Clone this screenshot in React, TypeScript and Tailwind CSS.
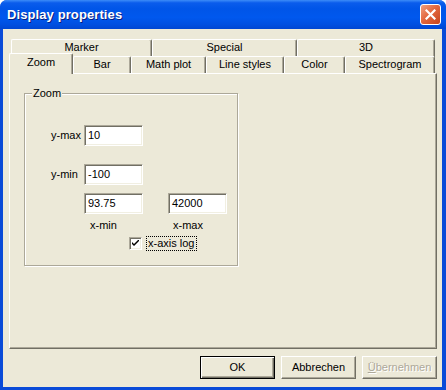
import * as React from 'react';

const font = { fontFamily: '"Liberation Sans", Arial, sans-serif' };

function Tab({ label, w, front }: { label: string; w: string; front?: boolean }) {
  return (
    <div
      className={`${w} ${front ? 'h-[17px]' : 'h-[18px]'} flex shrink-0 items-start justify-center rounded-t-[2px] border-t border-l border-r border-t-white border-l-white border-r-[#716F64] bg-[#ECE9D8] pt-[1px] text-[11px] leading-[13px] text-black shadow-[inset_-1px_0_0_#ACA899]`}
    >
      {label}
    </div>
  );
}

function Field({ value, w = 'w-[59px]' }: { value: string; w?: string }) {
  return (
    <div
      className={`${w} flex h-[21px] shrink-0 items-center border border-t-[#ACA899] border-l-[#ACA899] border-r-white border-b-white bg-white pl-[3px] text-[11px] text-black shadow-[inset_1px_1px_0_#716F64,inset_-1px_-1px_0_#F1EFE2]`}
    >
      {value}
    </div>
  );
}

function Button({
  label,
  isDefault,
  disabled,
}: {
  label: React.ReactNode;
  isDefault?: boolean;
  disabled?: boolean;
}) {
  return (
    <div
      className={`flex h-[23px] w-[75px] items-center justify-center bg-[#ECE9D8] text-[11px] ${
        isDefault
          ? 'border border-black shadow-[inset_1px_1px_0_#fff,inset_-1px_-1px_0_#716F64,inset_-2px_-2px_0_#ACA899]'
          : 'border border-t-white border-l-white border-r-[#716F64] border-b-[#716F64] shadow-[inset_-1px_-1px_0_#ACA899]'
      } ${disabled ? 'text-[#ACA899] [text-shadow:1px_1px_0_#fff]' : 'text-black'}`}
    >
      {label}
    </div>
  );
}

export default function App() {
  return (
    <div
      className="flex h-[390px] w-[446px] flex-col overflow-hidden rounded-t-[7px] bg-[#0A4BD8]"
      style={font}
    >
      {/* title bar */}
      <div className="flex h-[29px] shrink-0 items-center justify-between bg-[linear-gradient(to_bottom,#3C8CF8_0%,#0A5CEC_10%,#0055E8_30%,#0058EE_60%,#004FE0_85%,#0046D2_100%)] pr-[5px] pl-[7px]">
        <span className="text-[13px] font-bold tracking-[0.1px] text-white [text-shadow:1px_1px_0_#0A1E80]">
          Display properties
        </span>
        <div className="flex h-[21px] w-[21px] items-center justify-center rounded-[3px] border border-white bg-[linear-gradient(135deg,#F0A080_0%,#E3683F_45%,#C6431C_100%)]">
          <svg width="11" height="11" viewBox="0 0 11 11">
            <path d="M1.5 1.5 L9.5 9.5 M9.5 1.5 L1.5 9.5" stroke="#fff" strokeWidth="2.2" strokeLinecap="square" />
          </svg>
        </div>
      </div>

      {/* client */}
      <div className="mr-[4px] mb-[3px] ml-[3px] flex flex-1 flex-col bg-[#ECE9D8] pt-[10px] pl-[6px]">
        <div className="w-[428px]">
          <div className="ml-[2px] flex">
            <Tab label="Marker" w="w-[141px]" />
            <Tab label="Special" w="w-[145px]" />
            <Tab label="3D" w="w-[138px]" />
          </div>
          <div className="-mt-[1px] flex h-[17px] items-end">
            <div className="relative z-10 -mb-[1px] flex h-[21px] w-[64px] shrink-0 items-start justify-center rounded-t-[2px] border-t border-l border-r border-t-white border-l-white border-r-[#716F64] bg-[#ECE9D8] pt-[2px] text-[11px] leading-[13px] text-black shadow-[inset_-1px_0_0_#ACA899]">
              Zoom
            </div>
            <Tab label="Bar" w="w-[58px]" front />
            <Tab label="Math plot" w="w-[75px]" front />
            <Tab label="Line styles" w="w-[78px]" front />
            <Tab label="Color" w="w-[61px]" front />
            <Tab label="Spectrogram" w="w-[90px]" front />
          </div>

          {/* panel */}
          <div className="h-[276px] border border-t-white border-l-white border-r-[#716F64] border-b-[#716F64] pt-[19px] pl-[14px] shadow-[inset_-1px_-1px_0_#ACA899]">
            <div className="relative h-[173px] w-[214px] border border-[#ACA899] shadow-[inset_1px_1px_0_#fff,1px_1px_0_#fff]">
              <span className="absolute -top-[7px] left-[7px] bg-[#ECE9D8] px-[1px] text-[11px] leading-[13px] text-black">
                Zoom
              </span>
              <div className="flex flex-col pt-[31px] pl-[26px] text-[11px] text-black">
                <div className="flex items-center">
                  <span className="w-[33px]">y-max</span>
                  <Field value="10" />
                </div>
                <div className="mt-[18px] flex items-center">
                  <span className="w-[33px]">y-min</span>
                  <Field value="-100" />
                </div>
                <div className="mt-[8px] flex items-center pl-[33px]">
                  <Field value="93.75" />
                  <div className="w-[25px]" />
                  <Field value="42000" />
                </div>
                <div className="mt-[5px] flex h-[13px] items-center pl-[39px] leading-[13px]">
                  <span className="w-[83px]">x-min</span>
                  <span>x-max</span>
                </div>
                <div className="mt-[4px] flex items-center pl-[78px]">
                  <div className="flex h-[13px] w-[13px] items-center justify-center border border-t-[#ACA899] border-l-[#ACA899] border-r-white border-b-white bg-white shadow-[inset_1px_1px_0_#716F64,inset_-1px_-1px_0_#F1EFE2]">
                    <svg width="7" height="7" viewBox="0 0 7 7">
                      <path d="M0 2 L0 4 L2 6 L7 1 L7 -1 L2 4 Z" fill="#000" />
                    </svg>
                  </div>
                  <span className="ml-[4px] flex h-[15px] items-center border border-dotted border-black pr-[2px] pl-[1px] leading-[13px]">
                    x-axis log
                  </span>
                </div>
              </div>
            </div>
          </div>
        </div>

        {/* buttons */}
        <div className="mt-[7px] flex w-[428px] justify-end gap-[6px]">
          <Button label="OK" isDefault />
          <Button label="Abbrechen" />
          <Button
            label={
              <span>
                <span className="underline">Ü</span>bernehmen
              </span>
            }
            disabled
          />
        </div>
      </div>
    </div>
  );
}
